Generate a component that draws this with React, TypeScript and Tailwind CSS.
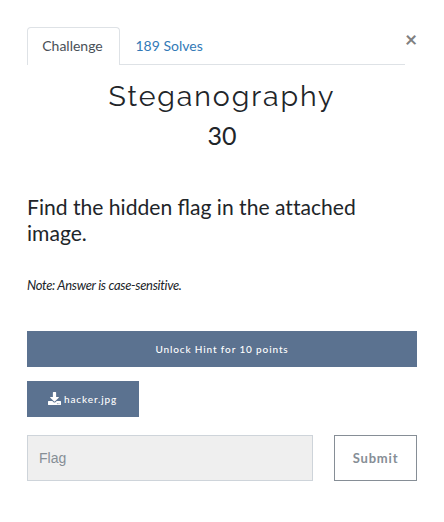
import { FaDownload } from "react-icons/fa";

export default function App() {
  return (
    <main className="h-[522px] w-[444px] bg-white px-[27px] pt-[27px] font-['Lato',sans-serif] text-[#212529]">
      <header className="flex h-[38px]">
        <nav className="flex w-[378px] border-b border-[#dee2e6] text-sm">
          <button className="h-[38px] w-[93px] rounded-t border border-b-0 border-[#dee2e6] bg-white pr-[2px] pb-[2px] text-[#495057]">Challenge</button>
          <button className="ml-[15.5px] text-[#337ab7]">189 Solves</button>
        </nav>
        <button aria-label="Close" className="h-6 w-[12px] text-left text-[21px] leading-[20px] font-bold text-[#808080]">×</button>
      </header>
      <h2 className="mt-[11px] text-center font-['Raleway','Open_Sans',sans-serif] text-[28.5px] leading-[40px] tracking-[1.9px]">Steganography</h2>
      <h3 className="mt-[3px] text-center text-[25px] leading-[32px]">30</h3>
      <p className="mt-[43px] text-[21.1px] leading-[26px]">Find the hidden flag in the <span className="[font-variant-ligatures:none]">attached</span><br />image.</p>
      <p className="mt-[29px] text-[13px] leading-[20px] tracking-[-0.32px] italic">Note: Answer is case-sensitive.</p>
      <button className="mt-[36px] block h-[36px] w-[390px] bg-[#5b7290] text-[10px] font-medium tracking-[0.87px] text-white">Unlock Hint for 10 points</button>
      <button className="mt-[14px] flex h-[36px] w-[112px] items-center gap-[3px] bg-[#5b7290] pl-[21px] text-[10px] font-medium tracking-[0.87px] text-white"><FaDownload size={13} className="mb-[2px] shrink-0" />hacker.jpg</button>
      <form className="mt-[18px] flex gap-[21px]">
        <input placeholder="Flag" className="h-[46px] w-[286px] border border-[#ced4da] bg-[#efefef] px-[11px] font-['Liberation_Sans',Arial,sans-serif] text-[14px] placeholder:text-[#868e96]" />
        <button type="button" className="h-[46px] w-[83px] border border-[#868e96] pt-px text-[13px] font-bold tracking-[0.8px] text-[#868e96]">Submit</button>
      </form>
    </main>
  );
}
